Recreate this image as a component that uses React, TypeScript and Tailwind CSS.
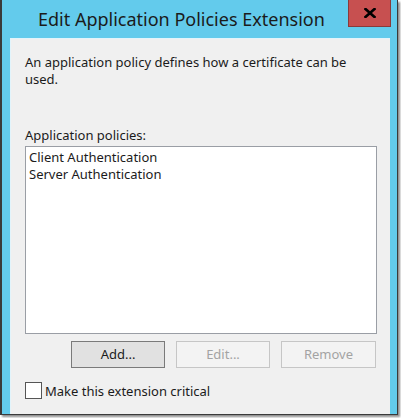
import React from "react";

export default function App() {
  const font = { fontFamily: '"Noto Sans", "Open Sans", sans-serif' };
  return (
    <div className="w-[401px] h-[418px] bg-white" style={font}>
      <div className="w-[398px] h-[415px] flex flex-col bg-[#63CBEC] border-l-2 border-r border-b border-[#3a3a3a] shadow-[2px_2px_2px_rgba(0,0,0,0.45)]">
        {/* title bar */}
        <div className="h-[38px] flex items-start relative">
          <div className="absolute left-[36px] top-[5px] text-[18px] leading-[28px] text-[#1b1b1b]">
            Edit Application Policies Extension
          </div>
          <div className="absolute left-[346px] top-0 w-[43px] h-[27px] bg-[#C75050] border border-t-0 border-[#8a3a3a] flex items-center justify-center">
            <svg width="12" height="10" viewBox="0 0 12 10">
              <path d="M1.5 1 L10.5 9 M10.5 1 L1.5 9" stroke="#000" strokeWidth="2.6" strokeLinecap="square" />
            </svg>
          </div>
        </div>
        {/* content */}
        <div className="flex-1 ml-[8px] mr-[7px] bg-[#F0F0F0] border-t border-l border-[#e2f4fb] pl-[14px] pr-[13px] pt-[15px] text-[13px] text-[#1b1b1b] flex flex-col">
          <div className="leading-[17px]">
            <div>An application policy defines how a certificate can be</div>
            <div>used.</div>
          </div>
          <div className="mt-[39px] leading-[16px]">Application policies:</div>
          <div className="mt-[3px] h-[188px] bg-white border border-[#9a9ea5] px-[3px] pt-[2px] leading-[17px]">
            <div>Client Authentication</div>
            <div>Server Authentication</div>
          </div>
          <div className="mt-[7px] flex justify-end gap-[11px] pr-[1px]">
            <div className="w-[94px] h-[27px] bg-[#E1E1E1] border border-[#7a7a7a] flex items-center justify-center">
              Add...
            </div>
            <div className="w-[94px] h-[27px] bg-[#F3F3F3] border border-[#C6C6C6] flex items-center justify-center text-[#A3A3A3]">
              Edit...
            </div>
            <div className="w-[95px] h-[27px] bg-[#F3F3F3] border border-[#C6C6C6] flex items-center justify-center text-[#A3A3A3]">
              Remove
            </div>
          </div>
          <div className="mt-[14px] flex items-center gap-[3px]">
            <div className="w-[17px] h-[17px] bg-white border border-[#555]" />
            <span className="leading-[16px]">Make this extension critical</span>
          </div>
        </div>
      </div>
    </div>
  );
}
